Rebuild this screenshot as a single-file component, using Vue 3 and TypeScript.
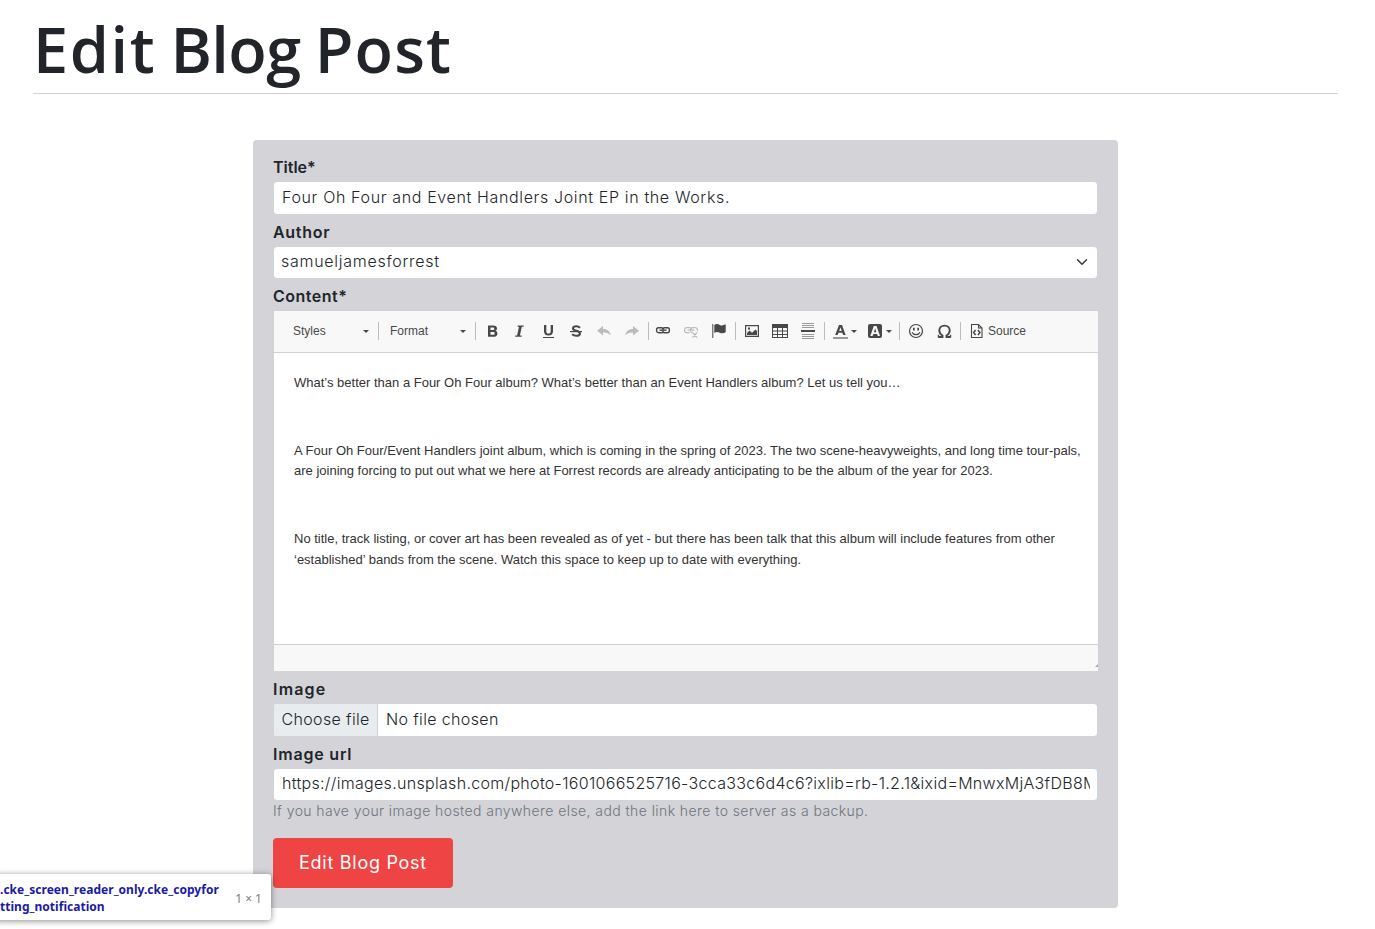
<script setup lang="ts">
import { ref } from 'vue'

const title = ref('Four Oh Four and Event Handlers Joint EP in the Works.')
const imageUrl = ref(
  'https://images.unsplash.com/photo-1601066525716-3cca33c6d4c6?ixlib=rb-1.2.1&ixid=MnwxMjA3fDB8MHxwaG90by1wYWdl'
)
const paragraphs: string[] = [
  'What’s better than a Four Oh Four album? What’s better than an Event Handlers album? Let us tell you…',
  '\u00a0',
  'A Four Oh Four/Event Handlers joint album, which is coming in the spring of 2023. The two scene-heavyweights, and long time tour-pals,\nare joining forcing to put out what we here at Forrest records are already anticipating to be the album of the year for 2023.',
  '\u00a0',
  'No title, track listing, or cover art has been revealed as of yet - but there has been talk that this album will include features from other\n‘established’ bands from the scene. Watch this space to keep up to date with everything.',
]
</script>

<template>
  <main class="page">
    <header class="head"><h1><span class="w-edit">Edit</span> <span class="w-blog">Blog</span> <span class="w-post">Post</span></h1></header>
    <form class="card" @submit.prevent>
      <label class="first"><span class="l-title">Title*</span></label>
      <input v-model="title" class="box tall t-title" type="text" />
      <label><span class="l-author">Author</span></label>
      <div class="box select">
        <span class="t-author">samueljamesforrest</span>
        <svg width="12" height="12" viewBox="0 0 16 16"><path d="M2 5l6 6 6-6" fill="none" stroke="#343a40" stroke-width="2" stroke-linecap="round" stroke-linejoin="round" /></svg>
      </div>
      <label><span class="l-content">Content*</span></label>
      <section class="editor">
        <div class="toolbar">
          <span class="combo styles">Styles<i class="arrow"></i></span>
          <i class="sep flush"></i>
          <span class="combo format">Format<i class="arrow"></i></span>
          <i class="sep combo-end"></i>
          <b class="btn"><svg viewBox="0 0 16 16"><path fill-rule="evenodd" d="M4 2.500h5.200c2.500 0 3.800 1.100 3.800 2.900 0 1.200-.7 2.100-1.800 2.400 1.400.3 2.200 1.200 2.200 2.600 0 2.200-1.500 3.400-4.100 3.400H4zM6.500 4.500v2.500h2.200c1.100 0 1.600-.4 1.600-1.300 0-.8-.5-1.200-1.600-1.200zM6.500 8.900v2.900h2.500c1.200 0 1.700-.5 1.700-1.500 0-.9-.6-1.400-1.800-1.400z" /></svg></b>
          <b class="btn"><svg viewBox="0 0 16 16"><path d="M5.700 2.500h6v1.300h-1.900L7.900 12.500h1.800v1.300H3.200v-1.300h1.900L7 3.800H5.400z" /></svg></b>
          <b class="btn"><svg viewBox="0 0 16 16"><path d="M4 2h2.300v6.200c0 1.700.7 2.400 2.200 2.400s2.200-.7 2.200-2.400V2H13v6.300c0 2.800-1.600 4.200-4.500 4.200S4 11.100 4 8.300zM3 14h11v1H3z" /></svg></b>
          <b class="btn"><svg viewBox="0 0 16 16"><path d="M12 4.700C11 3.700 9.800 3.300 8.200 3.300c-2 0-3.200.8-3.200 2.100 0 1.500 1.400 1.900 3.400 2.300 2.300.5 3.500 1.200 3.500 2.800 0 1.500-1.400 2.300-3.500 2.300-1.800 0-3.200-.5-4.300-1.500" fill="none" stroke="#484848" stroke-width="2.100" /><path d="M2 8h12v1.200H2z" /></svg></b>
          <b class="btn off"><svg viewBox="0 0 16 16"><path d="M1 7.700L7 3v3c4.500 0 7.200 2.300 7.700 6.500C13.200 10.300 11 9.400 7 9.400v3z" /></svg></b>
          <b class="btn off"><svg viewBox="0 0 16 16"><path d="M15 7.700L9 3v3c-4.500 0-7.200 2.300-7.700 6.500C2.800 10.300 5 9.400 9 9.400v3z" /></svg></b>
          <i class="sep tight"></i>
          <b class="btn"><svg viewBox="0 0 16 16"><g fill="none" stroke="#484848" stroke-width="1.400"><path d="M8.500 6.800V6.300a2 2 0 0 0-2-1.600h-3A2 2 0 0 0 1.600 6.700v1a2 2 0 0 0 2 2h3a2 2 0 0 0 1.900-1.400M7.500 6.800V6.300a2 2 0 0 1 2-1.600h3a2 2 0 0 1 1.900 2v1a2 2 0 0 1-2 2h-3a2 2 0 0 1-1.900-1.400" /><path d="M4.500 7.200h7" /></g></svg></b>
          <b class="btn off"><svg viewBox="0 0 16 16"><g fill="none" stroke="#bcbcbc" stroke-width="1.300"><path d="M8.500 6.800V6.300a2 2 0 0 0-2-1.600h-3A2 2 0 0 0 1.600 6.700v1a2 2 0 0 0 2 2h3M7.500 6.800V6.300a2 2 0 0 1 2-1.600h3a2 2 0 0 1 1.900 2v1.300M4.500 7.200h7M7.500 8.300a2 2 0 0 0 1.600 1.200M9.500 9.500l4.500 5M14 9.500l-4.500 5" /></g></svg></b>
          <b class="btn"><svg viewBox="0 0 16 16"><path d="M1.300 1h1v14h-1zM3.300 2c2-1.600 3.800-1 5.500-.1 1.700.8 3.400.7 5.900-.6v8c-2.300 1.300-4.200 1.300-5.900.5-1.900-.9-3.500-1.200-5.500.1z" /></svg></b>
          <i class="sep"></i>
          <b class="btn"><svg viewBox="0 0 16 16"><path fill-rule="evenodd" d="M1 2h14v12H1zm1.200 1.200v9.600h11.600V3.200zM3 12V10l2.500-2.500L8 9.700l3.500-3.200L13 8v4zM4 4.500h2v2H4z" /></svg></b>
          <b class="btn"><svg viewBox="0 0 16 16"><path fill-rule="evenodd" d="M0 1h16v14H0zm1 4v2.500h4V5zm5 0v2.500h4V5zm5 0v2.500h4V5zM1 8.500V11h4V8.500zm5 0V11h4V8.500zm5 0V11h4V8.500zM1 12v2h4v-2zm5 0v2h4v-2zm5 0v2h4v-2z" /></svg></b>
          <b class="btn"><svg viewBox="0 0 16 16"><path fill="#9a9a9a" d="M2 0h12v1H2zM2 2h12v1H2zM2 4h12v1H2zM2 11h12v1H2zM2 13h12v1H2zM2 15h12v1H2z" /><path d="M1 7h14v2H1z" /></svg></b>
          <i class="sep"></i>
          <b class="btn wide"><svg viewBox="0 0 16 16"><path fill-rule="evenodd" d="M7 2h3l3.600 10h-2.500l-.7-2.200H6.500L5.700 12H3.200zM8.500 4.300L7.200 8h2.500z" /><path fill="#999" d="M1 14h15v2H1z" /></svg><i class="arrow"></i></b>
          <b class="btn wide"><svg viewBox="0 0 16 16"><path fill-rule="evenodd" d="M3 1h10q2 0 2 2v10q0 2-2 2H3q-2 0-2-2V3q0-2 2-2zm3.800 2L3.300 13h2.300l.7-2h3.800l.7 2H13L9.500 3zM8.100 5.200l1.300 4H6.900z" /></svg><i class="arrow"></i></b>
          <i class="sep"></i>
          <b class="btn"><svg viewBox="0 0 16 16"><circle cx="8" cy="8" r="6.500" fill="none" stroke="#484848" stroke-width="1.200" /><path d="M5 4.700h1.700v2.800H5zM9.300 4.700H11v2.800H9.300z" /><path d="M4 9.300c1.500 3.200 6.500 3.200 8 0" fill="none" stroke="#484848" stroke-width="1.200" /></svg></b>
          <b class="btn"><svg viewBox="0 0 16 16"><path d="M2.500 14h4v-1.500C4.200 11.300 3.300 9.700 3.300 7.600 3.300 4.700 5.400 2.600 8.500 2.600s5.200 2.100 5.200 5c0 2.100-.9 3.700-3.200 4.900V14h4" fill="none" stroke="#484848" stroke-width="1.900" /><path d="M1.800 11.800h1.300v3H1.800zM13.900 11.800h1.300v3h-1.300z" /></svg></b>
          <i class="sep"></i>
          <b class="btn"><svg viewBox="0 0 16 16"><path d="M2.500 1.500h7l3.500 3.500v9.500H2.500zM9.500 1.500V5H13" fill="none" stroke="#484848" stroke-width="1.100" /><path d="M6.600 7L4.600 9.500l2 2.500M8.900 7l2 2.500-2 2.500" fill="none" stroke="#484848" stroke-width="1.500" /></svg></b>
          <span class="source">Source</span>
        </div>
        <div class="content"><p v-for="(p, i) in paragraphs" :key="i">{{ p }}</p></div>
        <div class="status"><svg width="3" height="3" viewBox="0 0 3 3"><path d="M3 0v3H0z" fill="#aaa" /></svg></div>
      </section>
      <label class="after-editor"><span class="l-image">Image</span></label>
      <div class="box tall file">
        <span class="choose"><span class="t-choose">Choose file</span></span><span class="t-none">No file chosen</span>
      </div>
      <label><span class="l-url">Image url</span></label>
      <input v-model="imageUrl" class="box t-url" type="text" />
      <p class="help">If you have your image hosted anywhere else, add the link here to server as a backup.</p>
      <button type="submit">Edit Blog Post</button>
    </form>
    <aside class="tip">
      <div class="sel">.cke_screen_reader_only.cke_copyfor<br />tting_notification</div>
      <span class="dim">1 × 1</span>
    </aside>
  </main>
</template>

<style>
html, body { background: #fff; overflow: hidden; }
</style>

<style scoped>
* { box-sizing: border-box; }
.page { position: relative; width: 1375px; height: 929px; overflow: hidden; font-family: Inter, "Liberation Sans", sans-serif; font-size: 16px; font-weight: 300; color: #212529; }
.head { height: 94px; margin: 0 37px 46px 33px; border-bottom: 1px solid #d3d3d4; }
h1 { margin: 0; padding-top: 5px; font: 600 63px/88px "Open Sans", sans-serif; word-spacing: -2.2px; white-space: nowrap; }
.w-edit { letter-spacing: 1.6px; }
.w-blog { letter-spacing: -0.6px; }
.w-post { letter-spacing: 1.2px; }
.card { width: 865px; height: 768px; margin-left: 253px; padding: 14px 20px 20px; background: #d3d3d8; border-radius: 4px; }
label { display: flex; align-items: flex-end; height: 31px; padding-bottom: 4px; line-height: 20px; font-weight: 600; }
label.first { height: 27px; }
label.after-editor { height: 32px; }
.l-author { letter-spacing: 0.7px; }
.l-content { letter-spacing: 0.5px; }
.l-image { letter-spacing: 1.2px; }
.l-url { letter-spacing: 0.8px; }
.box { display: block; width: 825px; height: 33px; padding: 0 7px 3px; border: 1px solid #ced4da; border-radius: 4px; background: #fff; font: inherit; color: #212529; outline: none; white-space: nowrap; }
.box.tall { height: 34px; padding-bottom: 2px; }
.box.t-title { padding-left: 8px; letter-spacing: 0.64px; }
.t-author { letter-spacing: 0.72px; }
.t-choose { letter-spacing: 0.35px; }
.t-none { padding-bottom: 2px; letter-spacing: 0.36px; }
.box.t-url { padding-left: 8px; letter-spacing: 0.31px; }
.select { display: flex; align-items: center; justify-content: space-between; }
.select svg { margin: 1px 2px 0 0; }
.box.file { display: flex; align-items: center; padding: 0; overflow: hidden; }
.choose { display: flex; align-items: center; width: 104px; height: 32px; padding: 0 0 2px 7.500px; margin-right: 8px; background: #e9ecef; border-right: 1px solid #ced4da; }
.editor { width: 826px; height: 361px; border: 1px solid #d1d1d1; background: #fff; font-family: "Liberation Sans", Arial, sans-serif; font-weight: 400; }
.toolbar { display: flex; align-items: center; height: 42px; padding-bottom: 1px; background: #f8f8f8; border-bottom: 1px solid #d1d1d1; font-size: 12px; color: #484848; }
.combo { display: flex; align-items: center; justify-content: space-between; height: 20px; padding-right: 9px; }
.styles { width: 104px; padding-left: 19px; }
.format { width: 96px; padding-left: 11px; }
.arrow { display: block; width: 0; height: 0; border: 3px solid transparent; border-top-color: #484848; border-bottom: 0; }
.sep { width: 1px; height: 18px; margin: 0 2px; background: #bcbcbc; }
.sep.flush { margin: 0; }
.sep.combo-end { margin-left: 0; }
.sep.tight { margin-right: 0; }
.btn { display: flex; align-items: center; justify-content: center; flex: none; width: 28px; height: 28px; }
.btn svg { width: 16px; height: 16px; fill: #484848; }
.btn.off svg { fill: #bcbcbc; }
.btn.wide { width: 35px; justify-content: flex-start; padding-left: 5px; }
.btn.wide .arrow { margin-left: 3px; }
.source { margin-left: -3px; }
.content { height: 291px; padding: 20px 0 0 20px; overflow: hidden; font-size: 13px; line-height: 20.8px; color: #333; white-space: pre; }
.content p { margin: 0 0 13px; }
.status { display: flex; justify-content: flex-end; align-items: flex-end; height: 27px; padding-bottom: 4px; background: #f8f8f8; border-top: 1px solid #d1d1d1; }
.help { margin: 0; height: 20px; font-size: 14px; line-height: 20px; letter-spacing: 0.42px; color: #6c757d; white-space: nowrap; }
button { display: block; width: 180px; height: 50px; margin-top: 17px; padding: 0; border: 0; border-radius: 4px; background: #ef4444; color: #fff; font: 400 18px/50px Inter, sans-serif; letter-spacing: 0.72px; }
.tip { position: absolute; left: -6px; top: 874px; display: flex; align-items: center; justify-content: space-between; width: 277px; height: 46px; padding: 2px 9px 0 6px; border-radius: 3px; background: #fff; box-shadow: 0 1px 6px rgba(0, 0, 0, .45); font: 12px/17px "Noto Sans", sans-serif; white-space: nowrap; }
.sel { font-weight: 700; color: #1a1aa6; letter-spacing: 0.03px; }
.dim { color: #808080; }
</style>
